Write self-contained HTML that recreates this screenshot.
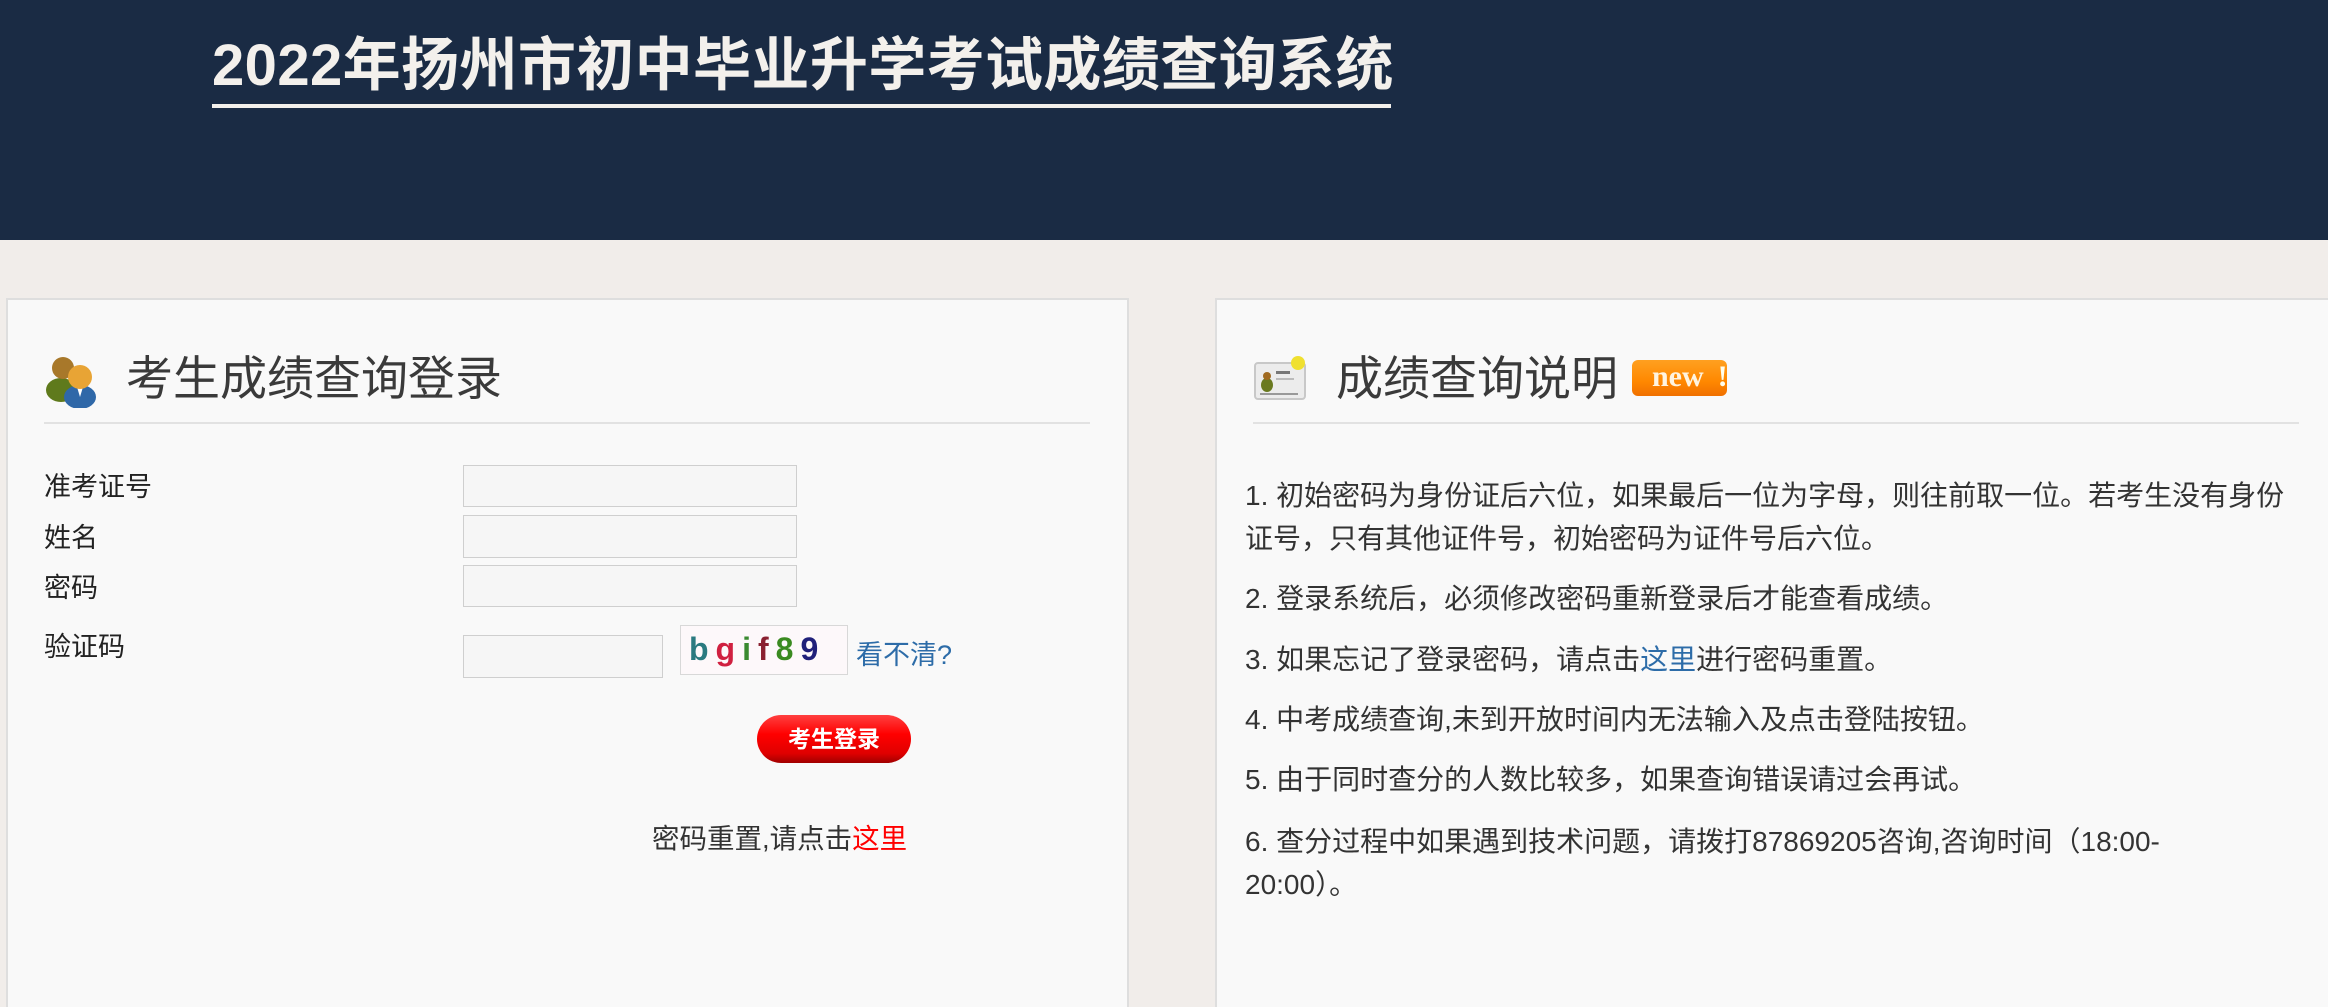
<!DOCTYPE html>
<html><head><meta charset="utf-8"><style>
*{margin:0;padding:0;box-sizing:border-box}
html,body{width:2328px;height:1007px;overflow:hidden}
body{background:#f1edea;font-family:"Liberation Sans","Noto Sans CJK SC",sans-serif;color:#333;position:relative}
.hd{position:absolute;left:0;top:0;width:2328px;height:240px;background:#1a2b44}
.title{position:absolute;left:212px;top:30px;font-size:58px;font-weight:bold;color:#f3f0ec;white-space:nowrap;letter-spacing:0.4px;line-height:72px}
.uline{position:absolute;left:212px;top:104px;width:1179px;height:4px;background:#f3f0ec}
.panel{position:absolute;background:#f9f9f9;border:2px solid #dedede;border-bottom:none;top:298px;height:709px}
.abs{position:absolute;white-space:nowrap}
.h2{font-size:47px;color:#3a3a3a;line-height:50px}
.hr{position:absolute;height:2px;background:#e2e2e2}
.lbl{font-size:27px;color:#222;line-height:32px}
.inp{position:absolute;background:#f6f6f6;border:1px solid #cfcfcf}
.p{position:absolute;left:1245px;font-size:28px;line-height:43px;color:#333;white-space:nowrap}
</style></head><body>
<div class="hd"></div>
<div class="title">2022年扬州市初中毕业升学考试成绩查询系统</div>
<div class="uline"></div>

<div class="panel" style="left:6px;width:1123px"></div>
<div class="panel" style="left:1215px;width:1113px;border-right:none"></div>

<svg class="abs" style="left:44px;top:350px" width="56" height="58" viewBox="0 0 56 58">
<ellipse cx="17" cy="40" rx="15" ry="12" fill="#5f7a1c"/>
<circle cx="19" cy="18" r="11" fill="#a8782a"/>
<ellipse cx="36" cy="47" rx="16" ry="12" fill="#2f68a8"/>
<path d="M33 37 L36 47 L39 37 Z" fill="#fff"/>
<circle cx="36" cy="27" r="12" fill="#e8a435"/>
</svg>
<div class="abs h2" style="left:126px;top:354px">考生成绩查询登录</div>
<div class="hr" style="left:44px;top:422px;width:1046px"></div>

<div class="abs lbl" style="left:44px;top:471px">准考证号</div>
<div class="abs lbl" style="left:44px;top:522px">姓名</div>
<div class="abs lbl" style="left:44px;top:572px">密码</div>
<div class="abs lbl" style="left:44px;top:631px">验证码</div>
<div class="inp" style="left:463px;top:465px;width:334px;height:42px"></div>
<div class="inp" style="left:463px;top:515px;width:334px;height:43px"></div>
<div class="inp" style="left:463px;top:565px;width:334px;height:42px"></div>
<div class="inp" style="left:463px;top:635px;width:200px;height:43px"></div>
<div class="abs" style="left:680px;top:625px;width:168px;height:50px;background:#fdf8fa;border:1px solid #d8d8d8;font:bold 32px 'Liberation Sans',sans-serif;line-height:46px;padding-left:8px;letter-spacing:7px"><span style="color:#2a7a80">b</span><span style="color:#d02040">g</span><span style="color:#3a8a30">i</span><span style="color:#8a2030">f</span><span style="color:#3a8a20">8</span><span style="color:#20207a">9</span></div>
<div class="abs" style="left:856px;top:638px;font-size:27px;color:#2d6ca8;line-height:34px">看不清?</div>
<div class="abs" style="left:757px;top:715px;width:154px;height:48px;border-radius:24px;background:linear-gradient(#ff4040,#ff0000 40%,#e00000 80%,#a00000);color:#fff;font-weight:bold;font-size:23px;line-height:48px;text-align:center">考生登录</div>
<div class="abs" style="left:652px;top:822px;font-size:27.5px;line-height:34px;color:#333">密码重置,请点击<span style="color:#f00">这里</span></div>

<svg class="abs" style="left:1254px;top:355px" width="56" height="46" viewBox="0 0 56 46">
<rect x="1" y="8" width="50" height="36" rx="3" fill="#ececec" stroke="#c8c8c8" stroke-width="2"/>
<ellipse cx="13" cy="30" rx="6" ry="7" fill="#6a7a20"/>
<circle cx="13" cy="21" r="4" fill="#a06a20"/>
<rect x="22" y="16" width="14" height="3" fill="#777"/>
<rect x="22" y="23" width="18" height="2" fill="#bbb"/>
<rect x="6" y="38" width="38" height="2" fill="#999"/>
<circle cx="44" cy="8" r="7" fill="#f0e030"/>
</svg>
<div class="abs h2" style="left:1336px;top:354px">成绩查询说明</div>
<div class="abs" style="left:1632px;top:360px;width:95px;height:36px;border-radius:6px;background:linear-gradient(#ffa020,#ff8800 60%,#f07000);color:#fff4e0;font:bold 30px 'Liberation Serif',serif;line-height:34px;padding-left:20px">new<span style="margin-left:14px;color:#ffe">!</span></div>
<div class="hr" style="left:1253px;top:422px;width:1046px"></div>

<div class="p" style="top:474px">1. 初始密码为身份证后六位，如果最后一位为字母，则往前取一位。若考生没有身份<br>证号，只有其他证件号，初始密码为证件号后六位。</div>
<div class="p" style="top:577px">2. 登录系统后，必须修改密码重新登录后才能查看成绩。</div>
<div class="p" style="top:638px">3. 如果忘记了登录密码，请点击<span style="color:#2d6ca8">这里</span>进行密码重置。</div>
<div class="p" style="top:698px">4. 中考成绩查询,未到开放时间内无法输入及点击登陆按钮。</div>
<div class="p" style="top:758px">5. 由于同时查分的人数比较多，如果查询错误请过会再试。</div>
<div class="p" style="top:820px">6. 查分过程中如果遇到技术问题，请拨打87869205咨询,咨询时间（18:00-<br>20:00）。</div>
</body></html>
